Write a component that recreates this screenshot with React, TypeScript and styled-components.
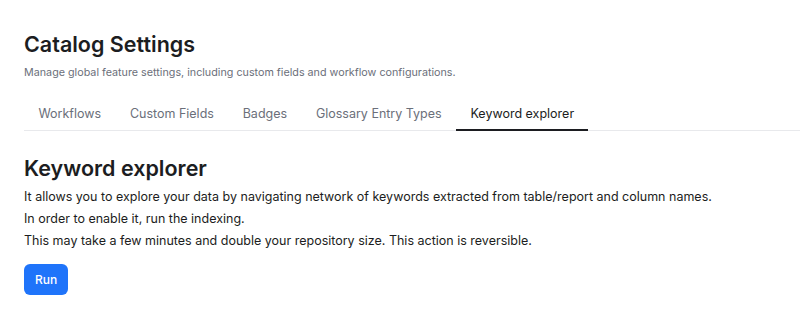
import React from "react";
import styled, { createGlobalStyle } from "styled-components";

const Global = createGlobalStyle`
  html, body { margin: 0; padding: 0; background: #ffffff; }
  body { font-family: Inter, "Noto Sans", sans-serif; color: #1c1d21; }
  * { box-sizing: border-box; }
`;

const Page = styled.div`
  padding: 30px 0 0 24px;
  display: flex;
  flex-direction: column;
`;

const Title = styled.h1`
  margin: 0;
  font-size: 21.5px;
  line-height: 28px;
  font-weight: 600;
  color: #1c1d21;
`;

const Subtitle = styled.p`
  margin: 7px 0 0;
  font-size: 10.75px;
  line-height: 16px;
  color: #6b6f7a;
`;

const TabBar = styled.div`
  margin-top: 14px;
  display: flex;
  border-bottom: 1px solid #e8e9ec;
`;

const Tab = styled.div<{ $active?: boolean }>`
  padding: 0 14.4px;
  height: 36px;
  display: flex;
  align-items: center;
  font-size: 12.5px;
  color: ${(p) => (p.$active ? "#1c1d21" : "#6b6f7a")};
  box-shadow: ${(p) => (p.$active ? "inset 0 -2px 0 #1c1d21" : "none")};
  margin-bottom: -1px;
`;

const Section = styled.div`
  margin-top: 23px;
  display: flex;
  flex-direction: column;
  align-items: flex-start;
`;

const Heading = styled.h2`
  margin: 0 0 4px;
  font-size: 21.5px;
  line-height: 28px;
  font-weight: 600;
  color: #1c1d21;
`;

const Text = styled.p`
  margin: 0;
  font-size: 12.5px;
  line-height: 22px;
  color: #1c1d21;
`;

const Button = styled.button`
  margin-top: 12px;
  height: 31px;
  padding: 0 11px;
  border: none;
  border-radius: 6px;
  background: #1f74fa;
  color: #ffffff;
  font-family: Inter, sans-serif;
  font-size: 12px;
  font-weight: 500;
`;

const tabs = ["Workflows", "Custom Fields", "Badges", "Glossary Entry Types", "Keyword explorer"];

export default function App() {
  return (
    <>
      <Global />
      <Page>
        <Title>Catalog Settings</Title>
        <Subtitle>Manage global feature settings, including custom fields and workflow configurations.</Subtitle>
        <TabBar>
          {tabs.map((t) => (
            <Tab key={t} $active={t === "Keyword explorer"}>{t}</Tab>
          ))}
        </TabBar>
        <Section>
          <Heading>Keyword explorer</Heading>
          <Text>It allows you to explore your data by navigating network of keywords extracted from table/report and column names.</Text>
          <Text>In order to enable it, run the indexing.</Text>
          <Text>This may take a few minutes and double your repository size. This action is reversible.</Text>
          <Button>Run</Button>
        </Section>
      </Page>
    </>
  );
}
